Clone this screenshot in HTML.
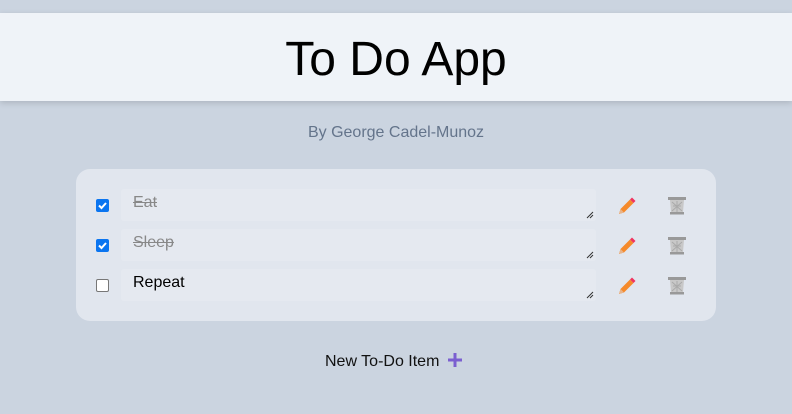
<!DOCTYPE html>
<html><head><style>
body{margin:0;width:792px;height:414px;background:#cbd4e0;font-family:"Liberation Sans",sans-serif;position:relative;overflow:hidden}
.hdr{position:absolute;left:0;top:13px;width:792px;height:88px;background:#eff3f8;box-shadow:0 2px 6px rgba(0,0,0,.15);text-align:center;font-size:48px;line-height:94px;color:#000}
.by{position:absolute;top:124px;width:100%;text-align:center;font-size:16px;color:#64748b}
.card{position:absolute;left:76px;top:169px;width:640px;height:152px;background:#e1e6ee;border-radius:14px}
.row{position:absolute;left:0;width:640px;height:32px}
.ta{position:absolute;left:45px;top:0;width:475px;height:32px;background:#e5e9f0;border-radius:3px}
.ta span{position:absolute;left:12px;top:5px;font-size:16px}
.done span{color:#888;text-decoration:line-through}
.cb{position:absolute;left:20px;top:10px;width:13px;height:13px;border-radius:2px;box-sizing:border-box}
.on{background:#0a75f0}
.off{background:#fff;border:1px solid #777}
.grip{position:absolute;right:2px;bottom:2px}
.pen{position:absolute;left:540px;top:6px}
.tr{position:absolute;left:591px;top:7px}
.new{position:absolute;top:352px;left:325px;font-size:16px;color:#111}
</style></head><body>
<div class="hdr">To Do App</div>
<div class="by">By George Cadel-Munoz</div>
<div class="card">
<div class="row" style="top:20px"><div class="cb on"><svg width="13" height="13"><path d="M3 6.5l2.5 2.5 4.5-5" stroke="#fff" stroke-width="2" fill="none"/></svg></div><div class="ta done"><span>Eat</span><svg class="grip" width="8" height="8"><path d="M1 7L7 1M4 7L7 4" stroke="#333"/></svg></div>
<svg class="pen" width="22" height="22"><path d="M3 19l1.5-5L14 4.5l3.5 3.5L8 17.5z" fill="#f58a2b"/><path d="M14 4.5l2-2 3.5 3.5-2 2z" fill="#f0345f"/><path d="M3 19l1.5-5 3.5 3.5z" fill="#e8b48a"/></svg>
<svg class="tr" width="20" height="20"><rect x="1" y="1" width="18" height="3" fill="#999"/><path d="M3 4h14l-1 12H4z" fill="#c8c8c8"/><path d="M5 6l10 9M15 6L5 15M10 5v11M6 10h8" stroke="#aaa"/><rect x="3" y="16" width="14" height="2.5" fill="#999"/></svg></div>
<div class="row" style="top:60px"><div class="cb on"><svg width="13" height="13"><path d="M3 6.5l2.5 2.5 4.5-5" stroke="#fff" stroke-width="2" fill="none"/></svg></div><div class="ta done"><span>Sleep</span><svg class="grip" width="8" height="8"><path d="M1 7L7 1M4 7L7 4" stroke="#333"/></svg></div>
<svg class="pen" width="22" height="22"><path d="M3 19l1.5-5L14 4.5l3.5 3.5L8 17.5z" fill="#f58a2b"/><path d="M14 4.5l2-2 3.5 3.5-2 2z" fill="#f0345f"/><path d="M3 19l1.5-5 3.5 3.5z" fill="#e8b48a"/></svg>
<svg class="tr" width="20" height="20"><rect x="1" y="1" width="18" height="3" fill="#999"/><path d="M3 4h14l-1 12H4z" fill="#c8c8c8"/><path d="M5 6l10 9M15 6L5 15M10 5v11M6 10h8" stroke="#aaa"/><rect x="3" y="16" width="14" height="2.5" fill="#999"/></svg></div>
<div class="row" style="top:100px"><div class="cb off"></div><div class="ta"><span>Repeat</span><svg class="grip" width="8" height="8"><path d="M1 7L7 1M4 7L7 4" stroke="#333"/></svg></div>
<svg class="pen" width="22" height="22"><path d="M3 19l1.5-5L14 4.5l3.5 3.5L8 17.5z" fill="#f58a2b"/><path d="M14 4.5l2-2 3.5 3.5-2 2z" fill="#f0345f"/><path d="M3 19l1.5-5 3.5 3.5z" fill="#e8b48a"/></svg>
<svg class="tr" width="20" height="20"><rect x="1" y="1" width="18" height="3" fill="#999"/><path d="M3 4h14l-1 12H4z" fill="#c8c8c8"/><path d="M5 6l10 9M15 6L5 15M10 5v11M6 10h8" stroke="#aaa"/><rect x="3" y="16" width="14" height="2.5" fill="#999"/></svg></div>
</div>
<div class="new">New To-Do Item <svg width="16" height="16" style="vertical-align:-2px;margin-left:3px"><path d="M8 1v14M1 8h14" stroke="#7b5fd0" stroke-width="3"/></svg></div>
</body></html>
